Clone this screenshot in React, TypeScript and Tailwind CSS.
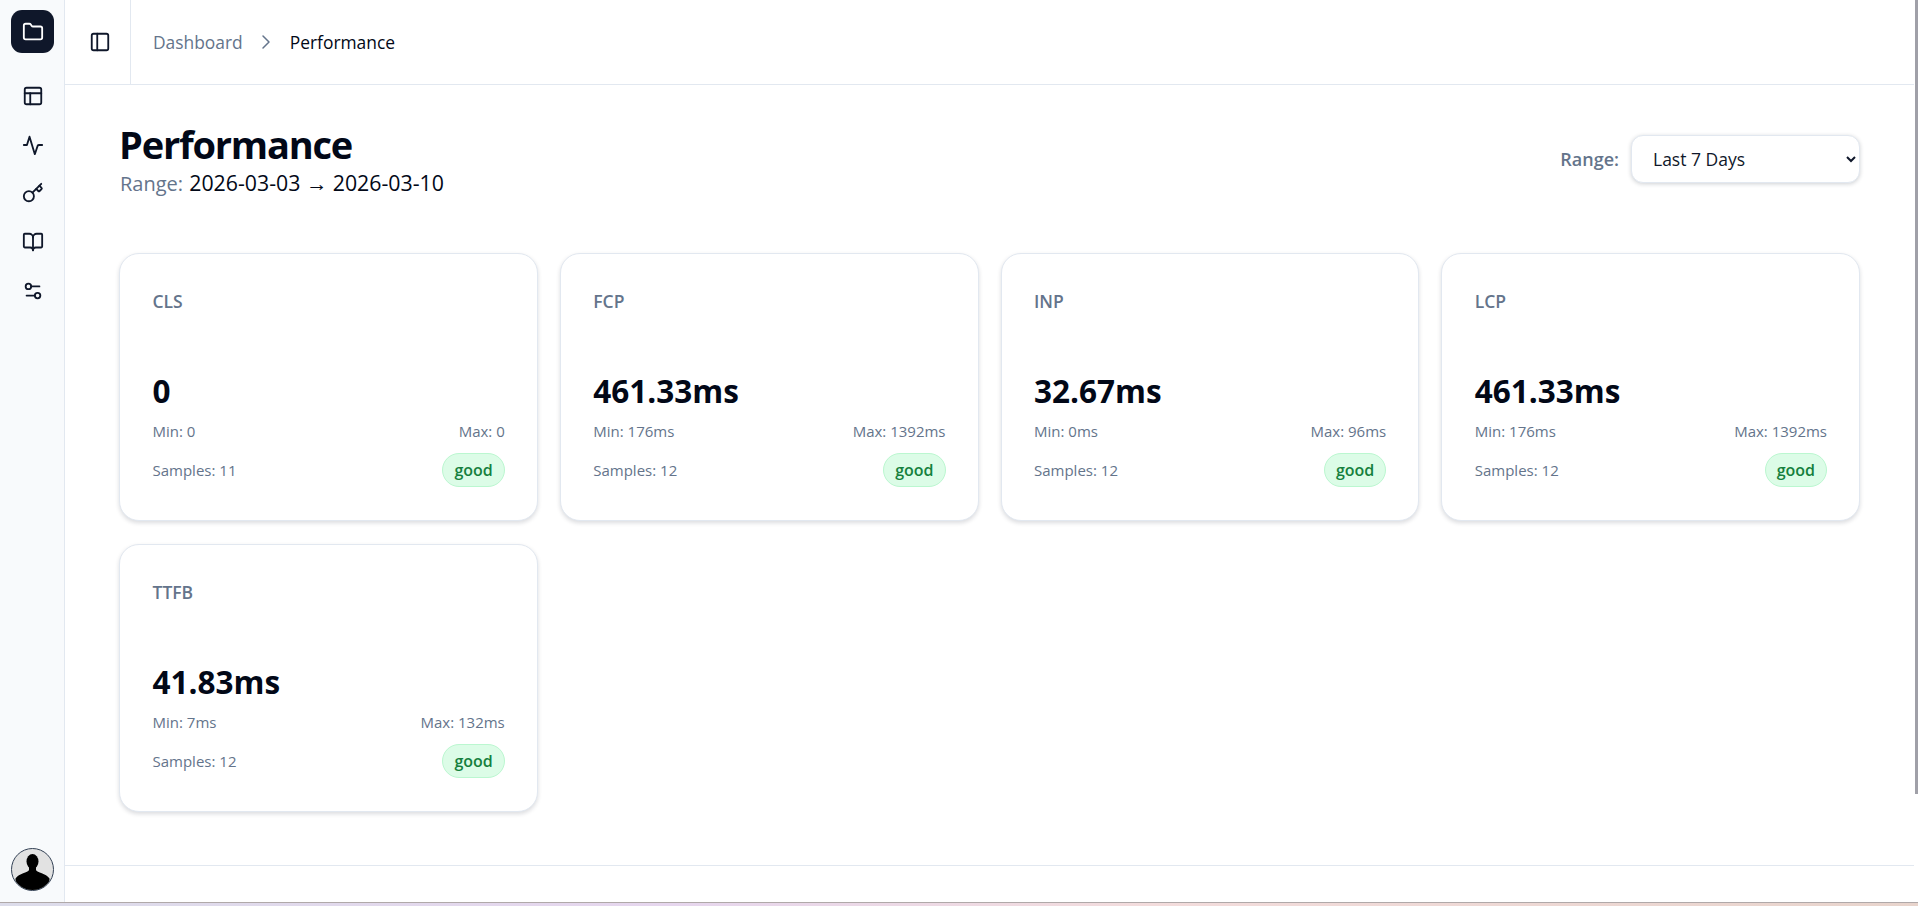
import { Folder, PanelLeft, PanelsTopLeft, Key, BookOpen, Settings2, ChevronRight } from "lucide-react";

const font = "font-['Open_Sans','Noto_Sans',sans-serif]";

type M = { name: string; value: string; min: string; max: string; samples: number };
const metrics: M[] = [
  { name: "CLS", value: "0", min: "0", max: "0", samples: 11 },
  { name: "FCP", value: "461.33ms", min: "176ms", max: "1392ms", samples: 12 },
  { name: "INP", value: "32.67ms", min: "0ms", max: "96ms", samples: 12 },
  { name: "LCP", value: "461.33ms", min: "176ms", max: "1392ms", samples: 12 },
  { name: "TTFB", value: "41.83ms", min: "7ms", max: "132ms", samples: 12 },
];

function Card({ m }: { m: M }) {
  return (
    <div className="bg-white rounded-[20px] border border-[#e2e8f0] shadow-[0_2px_4px_rgba(15,23,42,0.15)] h-[268px] pl-[32.5px] pr-[32px] pt-[35px] flex flex-col">
      <div className="text-[17.5px] leading-6 font-semibold text-[#64748b]">{m.name}</div>
      <div className="mt-[58px] text-[31.5px] leading-[40px] font-bold text-[#020817]">{m.value}</div>
      <div className="mt-[10px] flex justify-between text-[15px] leading-5 text-[#64748b]">
        <span>Min: {m.min}</span>
        <span>Max: {m.max}</span>
      </div>
      <div className="mt-[12px] flex justify-between items-center text-[15px] leading-5 text-[#64748b]">
        <span>Samples: {m.samples}</span>
        <span className="h-[34px] px-[11px] rounded-full border border-[#bbf7d0] bg-[#dcfce7] text-[#15803d] text-[16px] font-semibold flex items-center">good</span>
      </div>
    </div>
  );
}

export default function App() {
  return (
    <div className={`h-[906px] w-[1918px] overflow-hidden flex flex-col relative bg-white ${font}`}>
      <div className="flex flex-1 min-h-0">
        <aside className="w-[65px] shrink-0 bg-[#f8fafc] border-r border-[#e2e8f0] flex flex-col items-center pl-[1px] pt-[10px] pb-[11px] text-[#0f172a]">
          <div className="w-[43px] h-[43px] rounded-[11px] bg-[#0f172a] text-white flex items-center justify-center">
            <Folder size={22} strokeWidth={2} />
          </div>
          <div className="mt-[32px] flex flex-col items-center gap-[26.7px]">
            <PanelsTopLeft size={22} />
            <svg width="22" height="22" viewBox="0 0 24 24" fill="none" stroke="currentColor" strokeWidth="2" strokeLinecap="round" strokeLinejoin="round">
              <path d="M2 12h3.4L8.2 3 14 22l3-9c.3-.7 1-1 1.7-1H22" />
            </svg>
            <Key size={22} />
            <BookOpen size={22} />
            <Settings2 size={22} />
          </div>
          <div className="mt-auto -ml-[1px] w-[43px] h-[43px] rounded-full border border-[#334155] bg-[#e2e2e2] overflow-hidden">
            <svg viewBox="0 0 41 41" width="41" height="41">
              <ellipse cx="20.5" cy="12.5" rx="6" ry="7.5" fill="#000" />
              <path d="M17 17h7v4c1 3 10 3 13.5 8.5V41H3.5V29.5C7 24 16 24 17 21z" fill="#000" />
            </svg>
          </div>
        </aside>
        <div className="flex-1 min-w-0 flex flex-col mr-[4px]">
          <header className="h-[85px] shrink-0 border-b border-[#e2e8f0] flex">
            <div className="w-[66px] border-r border-[#e2e8f0] flex items-center justify-center pl-[4px]">
              <PanelLeft size={22} className="text-[#0f172a]" />
            </div>
            <nav className="flex items-center pl-[22px] text-[17.4px] leading-6">
              <span className="text-[#64748b]">Dashboard</span>
              <ChevronRight size={24} strokeWidth={1.5} className="ml-[11px] mr-[12px] text-[#64748b]" />
              <span className="text-[#020817]">Performance</span>
            </nav>
          </header>
          <main className="flex-1 min-h-0 pl-[54px] pr-[54px] pt-[37px]">
            <div className="flex justify-between items-start">
              <div>
                <h1 className="text-[38px] leading-[44px] font-bold text-[#020817] tracking-[-1.2px]">Performance</h1>
                <p className="text-[20px] leading-[28px] text-[#64748b] mt-[3px] pl-[1px]">
                  Range: <span className="ml-[1px] text-[21.3px] text-[#020817]">2026-03-03 → 2026-03-10</span>
                </p>
              </div>
              <div className="flex items-center gap-[12px] mt-[13px]">
                <label className="text-[18px] font-semibold text-[#64748b]">Range:</label>
                <select className="w-[229px] h-[48px] pl-[17px] pr-[4px] rounded-[12px] border border-[#e2e8f0] bg-white text-[17.5px] text-[#0f172a] shadow-[0_1px_4px_rgba(15,23,42,0.2)]" defaultValue="7">
                  <option value="7">Last 7 Days</option>
                </select>
              </div>
            </div>
            <div className="mt-[55px] grid grid-cols-4 gap-x-[22px] gap-y-[23px]">
              {metrics.map((m) => (
                <Card key={m.name} m={m} />
              ))}
            </div>
          </main>
          <div className="h-[37px] shrink-0 border-t border-[#e2e8f0]" />
        </div>
      </div>
      <div className="h-[4px] shrink-0 border-t border-[#b0a9a9] bg-[linear-gradient(to_right,#dcdcea_0%,#e6d6ee_35%,#f3dcdc_60%,#e8d4cc_100%)]" />
      <div className="absolute top-0 right-0 w-[3px] h-[794px] bg-[#a0a0a8]" />
    </div>
  );
}
